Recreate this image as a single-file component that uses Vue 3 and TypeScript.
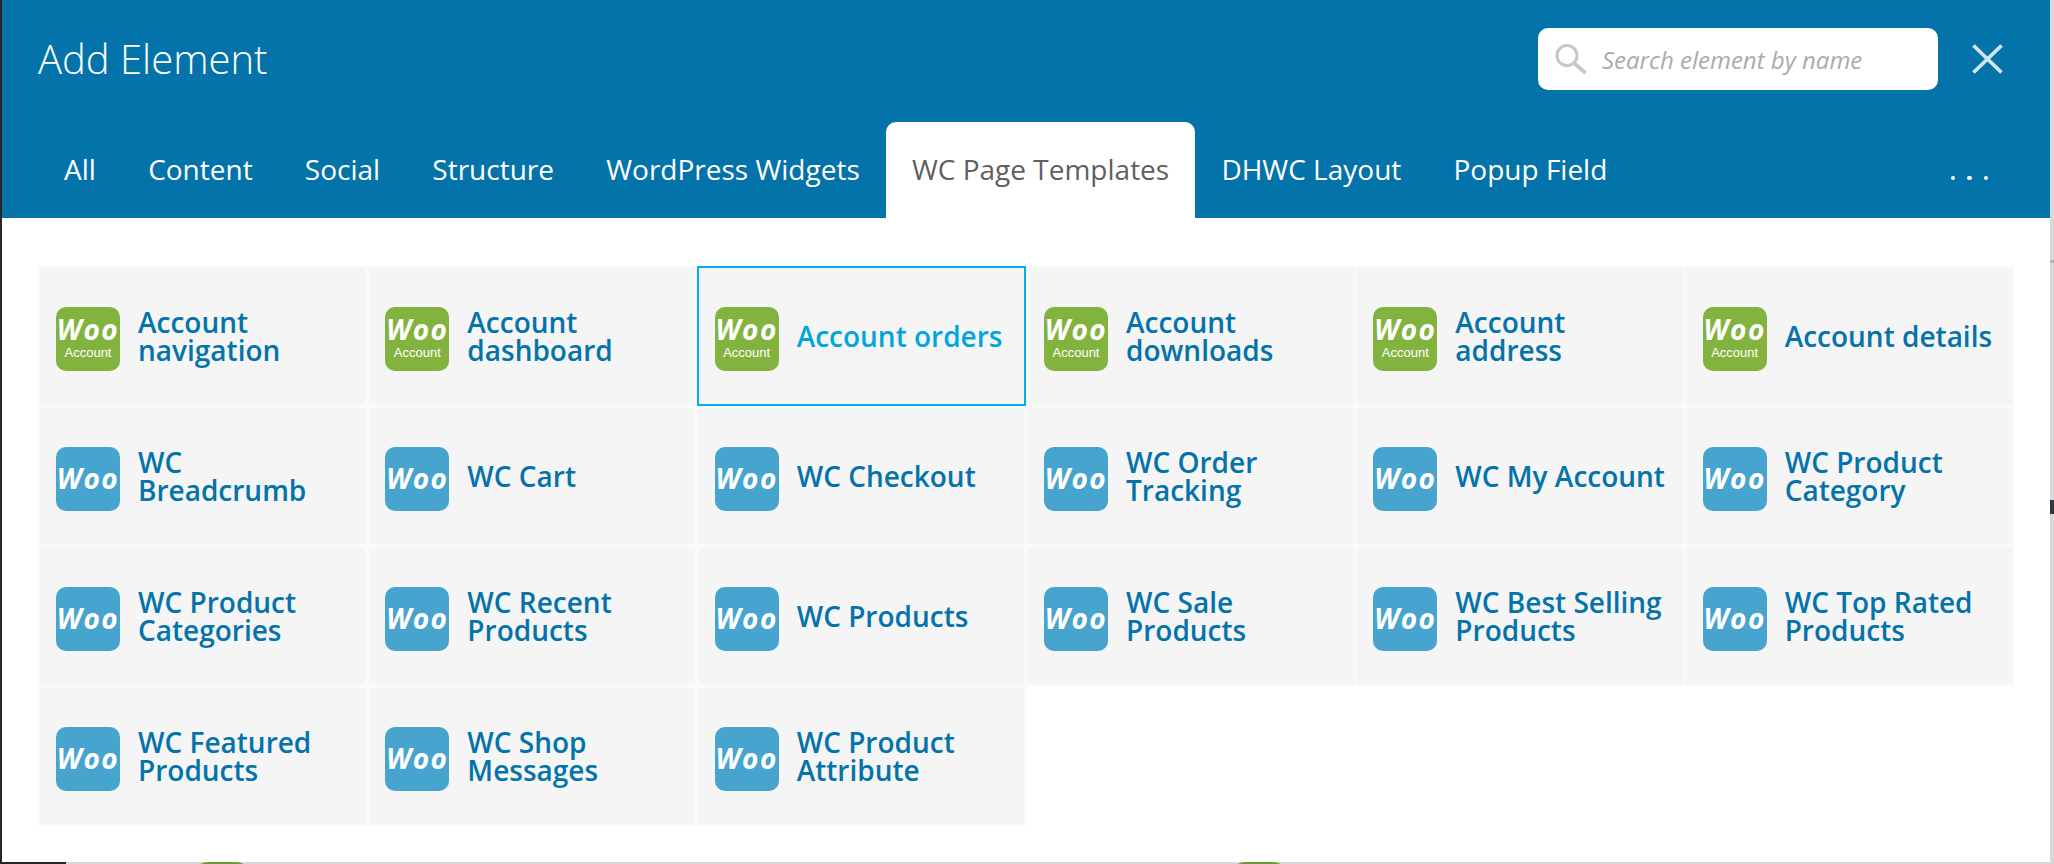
<script setup lang="ts">
interface Item { label: string; kind: 'account' | 'wc'; active?: boolean }
const tabs: string[] = ['All', 'Content', 'Social', 'Structure', 'WordPress Widgets', 'WC Page Templates', 'DHWC Layout', 'Popup Field']
const activeTab = 'WC Page Templates'
const items: Item[] = [
  { label: 'Account navigation', kind: 'account' },
  { label: 'Account dashboard', kind: 'account' },
  { label: 'Account orders', kind: 'account', active: true },
  { label: 'Account downloads', kind: 'account' },
  { label: 'Account address', kind: 'account' },
  { label: 'Account details', kind: 'account' },
  { label: 'WC Breadcrumb', kind: 'wc' },
  { label: 'WC Cart', kind: 'wc' },
  { label: 'WC Checkout', kind: 'wc' },
  { label: 'WC Order Tracking', kind: 'wc' },
  { label: 'WC My Account', kind: 'wc' },
  { label: 'WC Product Category', kind: 'wc' },
  { label: 'WC Product Categories', kind: 'wc' },
  { label: 'WC Recent Products', kind: 'wc' },
  { label: 'WC Products', kind: 'wc' },
  { label: 'WC Sale Products', kind: 'wc' },
  { label: 'WC Best Selling Products', kind: 'wc' },
  { label: 'WC Top Rated Products', kind: 'wc' },
  { label: 'WC Featured Products', kind: 'wc' },
  { label: 'WC Shop Messages', kind: 'wc' },
  { label: 'WC Product Attribute', kind: 'wc' },
]
</script>

<template>
  <div class="page">
    <div class="edge-left"></div>
    <div class="edge-bottom"></div>
    <div class="blob blob-a"></div>
    <div class="blob blob-b"></div>
    <div class="speck speck-a"></div>
    <div class="speck speck-b"></div>
    <div class="modal">
      <header class="head">
        <div class="top">
          <h1 class="title">Add Element</h1>
          <div class="search">
            <svg class="glass" width="32" height="30" viewBox="0 0 32 30" fill="none" stroke="#c3c7cf">
              <circle cx="12" cy="11.5" r="10" stroke-width="3" />
              <path d="M19 19 L30.5 29" stroke-width="3.8" />
            </svg>
            <span class="placeholder">Search element by name</span>
          </div>
          <svg class="close" width="31" height="30" viewBox="0 0 31 30" stroke="#d3e6ef" stroke-width="3.8" fill="none">
            <path d="M1.5 1.5 L29.5 28.5 M29.5 1.5 L1.5 28.5" />
          </svg>
        </div>
        <nav class="tabs">
          <a v-for="t in tabs" :key="t" class="tab" :class="{ on: t === activeTab }">{{ t }}</a>
          <span class="more"><i></i><i></i><i></i></span>
        </nav>
      </header>
      <main class="grid">
        <div v-for="it in items" :key="it.label" class="cell" :class="{ active: it.active }">
          <div class="logo" :class="it.kind">
            <span class="woo">Woo</span>
            <span v-if="it.kind === 'account'" class="sub">Account</span>
          </div>
          <span class="label">{{ it.label }}</span>
        </div>
      </main>
    </div>
  </div>
</template>

<style>
html, body { margin: 0; padding: 0; background: #d8d8d8; }
</style>

<style scoped>
.page {
  width: 2054px;
  height: 864px;
  overflow: hidden;
  position: relative;
  background: #d8d8d8;
  font-family: "Open Sans", sans-serif;
}
.edge-left { position: absolute; left: 0; top: 0; width: 2px; height: 864px; background: #23282d; }
.edge-bottom { position: absolute; left: 0; top: 862px; width: 66px; height: 2px; background: #23282d; }
.blob { position: absolute; top: 862px; width: 56px; height: 40px; border-radius: 14px 14px 0 0; background: #6f9a2f; }
.blob-a { left: 194px; }
.blob-b { left: 1231px; }
.speck { position: absolute; left: 2050px; width: 4px; }
.speck-a { top: 260px; height: 3px; background: #b5b5b5; }
.speck-b { top: 500px; height: 14px; background: #33363a; }
.modal {
  position: relative;
  margin-left: 2px;
  width: 2048px;
  height: 862px;
  background: #fff;
  display: flex;
  flex-direction: column;
}
.head {
  background: #0473aa;
  height: 218px;
  display: flex;
  flex-direction: column;
  flex: none;
}
.top {
  height: 122px;
  display: flex;
  align-items: center;
  padding: 0 47px 4px 36px;
  box-sizing: border-box;
}
.title {
  margin: 0;
  flex: 1;
  font-size: 40px;
  font-weight: 300;
  color: #fff;
  line-height: 54px;
}
.search {
  width: 400px;
  height: 62px;
  background: #fff;
  border-radius: 10px;
  display: flex;
  align-items: center;
  padding-left: 17px;
  box-sizing: border-box;
}
.glass { margin-right: 15px; flex: none; }
.placeholder {
  font-size: 24px;
  font-style: italic;
  color: #a9abae;
}
.close { margin-left: 34px; flex: none; }
.tabs {
  flex: 1;
  display: flex;
  align-items: stretch;
  padding-left: 36px;
}
.tab {
  display: flex;
  align-items: center;
  padding: 0 26.1px 2px;
  font-size: 28px;
  color: #fff;
  border-radius: 10px 10px 0 0;
}
.tab.on { background: #fff; color: #5f5f5f; }
.more {
  margin-left: auto;
  margin-right: 62px;
  padding-top: 16px;
  display: flex;
  align-items: center;
  gap: 12px;
}
.more i { display: block; width: 4.5px; height: 4.5px; border-radius: 50%; background: #fff; }
.grid {
  padding: 48px 36px 0;
  display: grid;
  grid-template-columns: repeat(6, 1fr);
  grid-auto-rows: 140px;
}
.cell {
  background: #f5f5f5;
  border: 2px solid #fafafa;
  display: flex;
  align-items: center;
  padding-left: 16px;
  gap: 18px;
  box-sizing: border-box;
}
.cell.active { border-color: #00aeef; }
.logo {
  width: 64px;
  height: 64px;
  margin-top: 6px;
  border-radius: 10px;
  flex: none;
  display: flex;
  flex-direction: column;
  align-items: center;
  justify-content: center;
  box-sizing: border-box;
  color: #fff;
}
.logo.account { background: #83b33f; padding-bottom: 5px; }
.logo.wc { background: #47a4cf; padding-bottom: 2px; }
.woo {
  font-family: "Open Sans", sans-serif;
  font-style: italic;
  font-weight: 700;
  font-size: 28px;
  letter-spacing: 1.5px;
  line-height: 32px;
}
.sub {
  font-family: "Liberation Sans", sans-serif;
  font-size: 13px;
  line-height: 16px;
}
.label {
  font-size: 28px;
  font-weight: 600;
  line-height: 28px;
  color: #0473aa;
  max-width: 212px;
}
.cell.active .label { color: #00a5de; }
</style>
